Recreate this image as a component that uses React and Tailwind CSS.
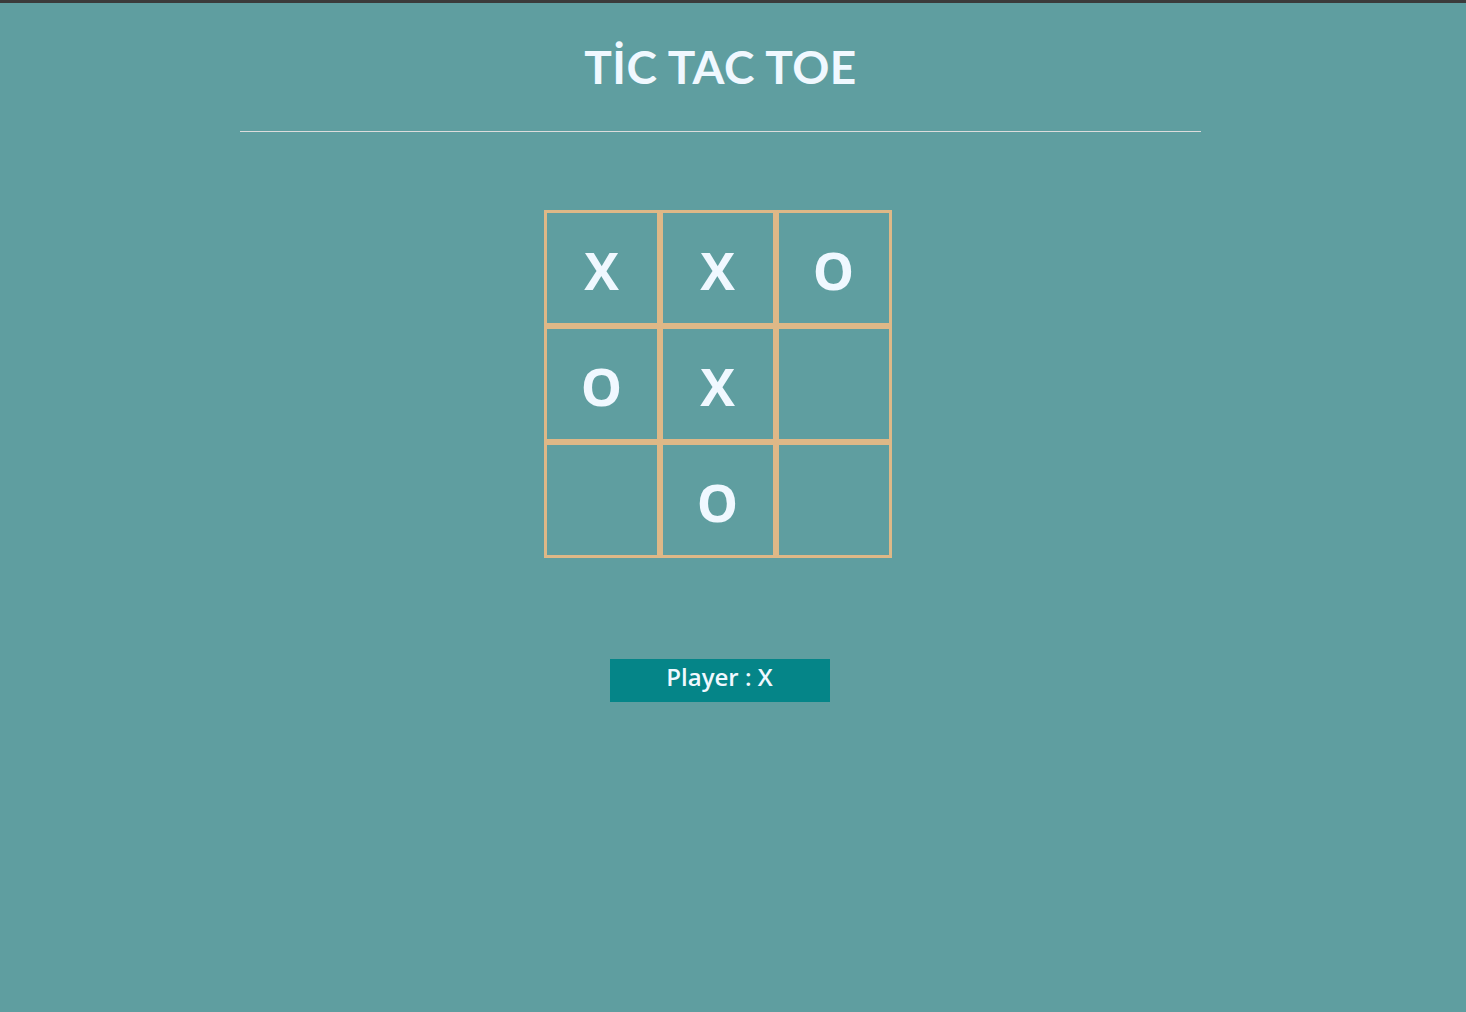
export default function App() {
  const board = ["X", "X", "O", "O", "X", "", "", "O", ""];

  return (
    <div className="min-h-[1012px] bg-[#5f9ea0] border-t-[3px] border-[#3b3b3b]">
      <div className="w-[1441px] flex flex-col items-center">
        <h1 className="mt-[36px] h-[59px] text-[46px] leading-[55px] font-bold tracking-[0.5px] text-[#f0f8ff] [font-family:Lato,sans-serif]">
          TİC TAC TOE
        </h1>
        <hr className="mt-[33px] w-[961px] border-0 border-t border-[#dcdcdc]" />
        <div className="mt-[78px] grid grid-cols-[repeat(3,116px)] ml-[-6px]">
          {board.map((v, i) => (
            <div
              key={i}
              className="w-[116px] h-[116px] border-[3px] border-[#deb887] flex items-center justify-center pt-[4px] text-[52px] font-bold text-[#f0f8ff] [font-family:'Open_Sans',sans-serif]"
            >
              {v}
            </div>
          ))}
        </div>
        <div className="mt-[101px] ml-[-2px] w-[220px] h-[43px] bg-[#058588] flex items-center justify-center pb-[7px] text-[24px] font-semibold text-[#f0f8ff] [font-family:'Open_Sans',sans-serif]">
          Player : X
        </div>
      </div>
    </div>
  );
}
